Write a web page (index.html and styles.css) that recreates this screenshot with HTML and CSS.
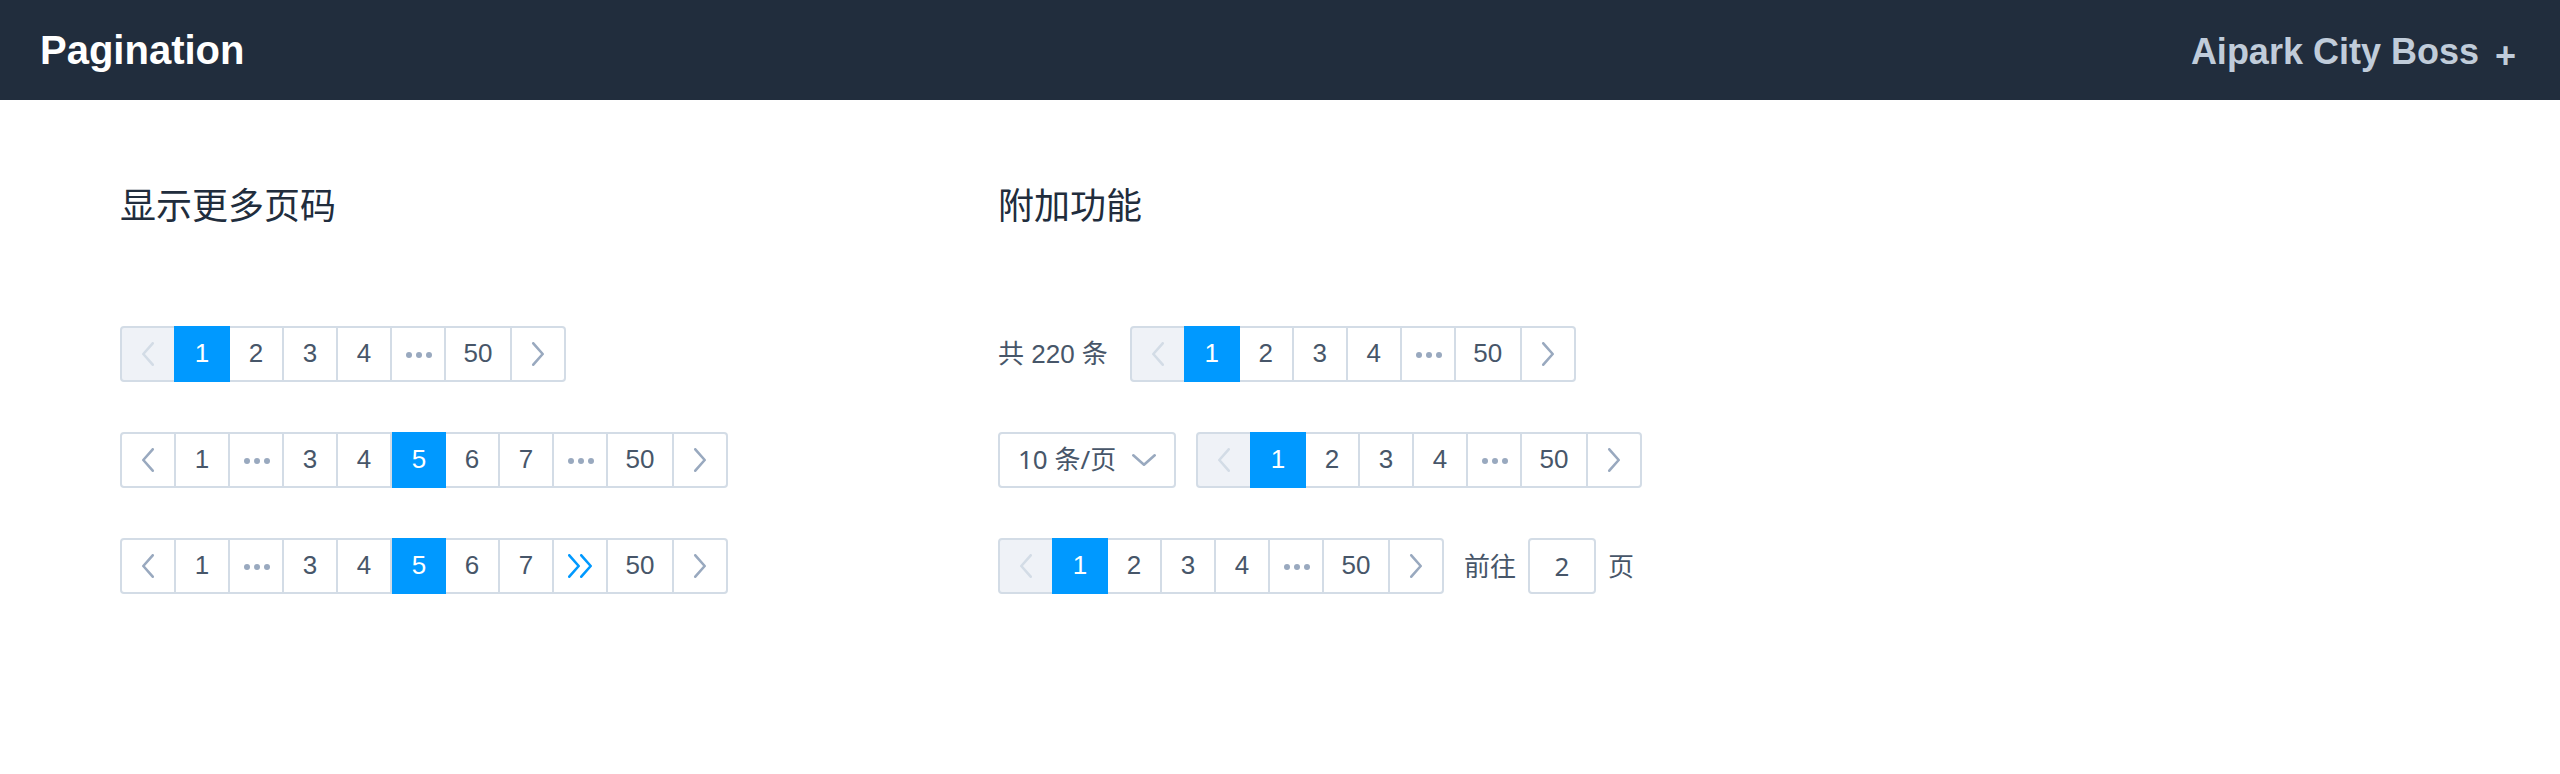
FILE: index.html
```html
<!DOCTYPE html>
<html lang="zh-CN">
<head>
<meta charset="utf-8">
<meta name="viewport" content="width=device-width, initial-scale=1">
<title>Pagination</title>
<link rel="stylesheet" href="styles.css">
</head>
<body>
<svg class="sprite" aria-hidden="true">
  <symbol id="prev" viewBox="0 0 24 24"><path d="M16.7 1.3 7.3 12l9.4 10.7"/></symbol>
  <symbol id="next" viewBox="0 0 24 24"><path d="M7.3 1.3 16.7 12 7.3 22.7"/></symbol>
  <symbol id="more" viewBox="0 0 26 6"><circle cx="3" cy="3" r="3"/><circle cx="13" cy="3" r="3"/><circle cx="23" cy="3" r="3"/></symbol>
  <symbol id="jump" viewBox="0 0 24 24"><path d="M1.3 1.3 10.7 12 1.3 22.7M13.3 1.3 22.7 12l-9.4 10.7"/></symbol>
  <symbol id="down" viewBox="0 0 24 24"><path d="M1.3 7.3 12 16.7 22.7 7.3"/></symbol>
</svg>

<header class="topbar">
  <h1 class="topbar-title">Pagination</h1>
  <p class="topbar-brand"><span>Aipark City Boss</span><span class="topbar-plus">+</span></p>
</header>

<main class="content">
  <section class="group">
    <h2 class="group-title">显示更多页码</h2>
    <div class="rows">
      <nav class="pager" aria-label="分页 1">
        <button class="page is-disabled" disabled aria-label="上一页"><svg class="icon"><use href="#prev"/></svg></button>
        <button class="page is-active" aria-current="page">1</button>
        <button class="page">2</button>
        <button class="page">3</button>
        <button class="page">4</button>
        <button class="page" aria-label="更多"><svg class="dots"><use href="#more"/></svg></button>
        <button class="page is-wide">50</button>
        <button class="page" aria-label="下一页"><svg class="icon"><use href="#next"/></svg></button>
      </nav>
      <nav class="pager" aria-label="分页 2">
        <button class="page" aria-label="上一页"><svg class="icon"><use href="#prev"/></svg></button>
        <button class="page">1</button>
        <button class="page" aria-label="更多"><svg class="dots"><use href="#more"/></svg></button>
        <button class="page">3</button>
        <button class="page">4</button>
        <button class="page is-active" aria-current="page">5</button>
        <button class="page">6</button>
        <button class="page">7</button>
        <button class="page" aria-label="更多"><svg class="dots"><use href="#more"/></svg></button>
        <button class="page is-wide">50</button>
        <button class="page" aria-label="下一页"><svg class="icon"><use href="#next"/></svg></button>
      </nav>
      <nav class="pager" aria-label="分页 3">
        <button class="page" aria-label="上一页"><svg class="icon"><use href="#prev"/></svg></button>
        <button class="page">1</button>
        <button class="page" aria-label="更多"><svg class="dots"><use href="#more"/></svg></button>
        <button class="page">3</button>
        <button class="page">4</button>
        <button class="page is-active" aria-current="page">5</button>
        <button class="page">6</button>
        <button class="page">7</button>
        <button class="page" aria-label="向后 5 页"><svg class="icon is-primary"><use href="#jump"/></svg></button>
        <button class="page is-wide">50</button>
        <button class="page" aria-label="下一页"><svg class="icon"><use href="#next"/></svg></button>
      </nav>
    </div>
  </section>

  <section class="group">
    <h2 class="group-title">附加功能</h2>
    <div class="rows">
      <div class="row">
        <span class="total">共 220 条</span>
        <nav class="pager" aria-label="分页 4">
          <button class="page is-disabled" disabled aria-label="上一页"><svg class="icon"><use href="#prev"/></svg></button>
          <button class="page is-active" aria-current="page">1</button>
          <button class="page">2</button>
          <button class="page">3</button>
          <button class="page">4</button>
          <button class="page" aria-label="更多"><svg class="dots"><use href="#more"/></svg></button>
          <button class="page is-wide">50</button>
          <button class="page" aria-label="下一页"><svg class="icon"><use href="#next"/></svg></button>
        </nav>
      </div>
      <div class="row">
        <div class="sizes">
          <select class="sizes-select" aria-label="每页条数">
            <option>10 条/页</option>
            <option>20 条/页</option>
            <option>50 条/页</option>
          </select>
          <svg class="icon sizes-arrow" aria-hidden="true"><use href="#down"/></svg>
        </div>
        <nav class="pager" aria-label="分页 5">
          <button class="page is-disabled" disabled aria-label="上一页"><svg class="icon"><use href="#prev"/></svg></button>
          <button class="page is-active" aria-current="page">1</button>
          <button class="page">2</button>
          <button class="page">3</button>
          <button class="page">4</button>
          <button class="page" aria-label="更多"><svg class="dots"><use href="#more"/></svg></button>
          <button class="page is-wide">50</button>
          <button class="page" aria-label="下一页"><svg class="icon"><use href="#next"/></svg></button>
        </nav>
      </div>
      <div class="row">
        <nav class="pager" aria-label="分页 6">
          <button class="page is-disabled" disabled aria-label="上一页"><svg class="icon"><use href="#prev"/></svg></button>
          <button class="page is-active" aria-current="page">1</button>
          <button class="page">2</button>
          <button class="page">3</button>
          <button class="page">4</button>
          <button class="page" aria-label="更多"><svg class="dots"><use href="#more"/></svg></button>
          <button class="page is-wide">50</button>
          <button class="page" aria-label="下一页"><svg class="icon"><use href="#next"/></svg></button>
        </nav>
        <div class="jumper">
          <label class="jumper-text" for="goto">前往</label>
          <input class="jumper-input" id="goto" type="text" inputmode="numeric" value="2">
          <span class="jumper-text">页</span>
        </div>
      </div>
    </div>
  </section>
</main>
</body>
</html>
```
FILE: styles.css
```css
:root {
  --primary: #0099ff;
  --dark: #212d3d;
  --text: #475669;
  --icon: #99a9bf;
  --border: #d3dce6;
  --fill: #eff2f7;
  --latin-first: "Liberation Sans", "Noto Sans CJK SC", sans-serif;
  --humanist-first: "Noto Sans", "Noto Sans CJK SC", sans-serif;
}

* {
  box-sizing: border-box;
}

body {
  margin: 0;
  background: #fff;
  color: var(--text);
  font-family: var(--latin-first);
  font-size: 26px;
}

button,
input,
select {
  margin: 0;
  color: inherit;
  font: inherit;
}

.sprite {
  display: none;
}

.topbar {
  display: flex;
  align-items: center;
  justify-content: space-between;
  min-height: 100px;
  padding: 0 44px 0 40px;
  background: var(--dark);
}

.topbar-title {
  margin: 0;
  color: #fff;
  font-size: 40px;
  font-weight: 700;
}

.topbar-brand {
  display: flex;
  gap: 16px;
  margin: 0;
  padding-top: 8px;
  color: #c0ccda;
  font-size: 36px;
  font-weight: 700;
}

.topbar-plus {
  padding-top: 4px;
}

.content {
  display: flex;
  flex-wrap: wrap;
  gap: 80px 270px;
  padding: 80px 120px;
}

.group-title {
  margin: 0 0 100px;
  color: var(--dark);
  font-family: "Noto Sans CJK SC", sans-serif;
  font-size: 36px;
  font-weight: 400;
  line-height: 46px;
}

.rows {
  display: flex;
  flex-direction: column;
  gap: 50px;
}

.row {
  display: flex;
  align-items: center;
  gap: 20px;
}

.total {
  padding: 0 2px 6px 0;
}

.pager {
  display: flex;
}

.page {
  display: flex;
  align-items: center;
  justify-content: center;
  width: 56px;
  height: 56px;
  padding: 0 0 2px;
  border: 2px solid var(--border);
  background: #fff;
  cursor: pointer;
}

.page + .page {
  margin-left: -2px;
}

.page:first-child {
  border-radius: 4px 0 0 4px;
}

.page:last-child {
  border-radius: 0 4px 4px 0;
}

.page.is-wide {
  width: 68px;
}

.page:has(svg) {
  padding: 0;
}

.page.is-disabled {
  background: var(--fill);
  cursor: not-allowed;
}

.page.is-active {
  position: relative;
  z-index: 1;
  width: 54px;
  margin-left: 0;
  border-color: var(--primary);
  background: var(--primary);
  color: #fff;
}

.page.is-disabled + .is-active {
  width: 56px;
  margin-left: -2px;
}

.icon {
  width: 24px;
  height: 24px;
  fill: none;
  stroke: var(--icon);
  stroke-width: 2.6;
  stroke-linecap: round;
  stroke-linejoin: round;
}

.icon.is-primary {
  stroke: var(--primary);
}

.is-disabled .icon {
  stroke: var(--border);
}

.dots {
  width: 26px;
  height: 6px;
  margin: 2px 0 0 2px;
  fill: var(--icon);
}

.sizes {
  position: relative;
}

.sizes-select {
  display: block;
  width: 178px;
  height: 56px;
  padding: 0 48px 2px 18px;
  border: 2px solid var(--border);
  border-radius: 4px;
  background: #fff;
  font-family: var(--humanist-first);
  appearance: none;
}

.sizes-arrow {
  position: absolute;
  top: 16px;
  right: 20px;
  pointer-events: none;
}

.jumper {
  display: flex;
  align-items: center;
  gap: 12px;
}

.jumper-text {
  padding-bottom: 4px;
}

.jumper-input {
  width: 68px;
  height: 56px;
  padding: 0;
  border: 2px solid var(--border);
  border-radius: 4px;
  background: #fff;
  font-family: var(--humanist-first);
  text-align: center;
}
```
